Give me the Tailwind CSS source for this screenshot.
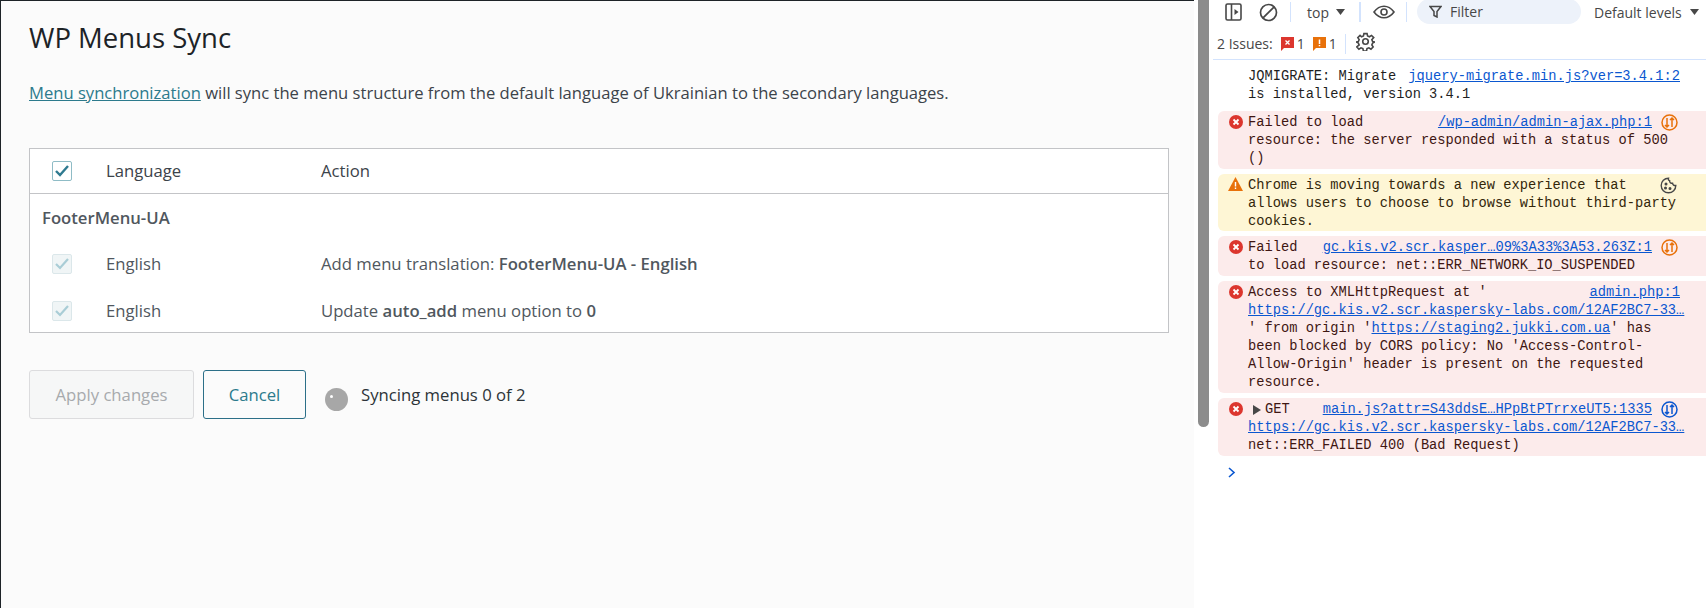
<!DOCTYPE html>
<html lang="en">
<head>
    <meta charset="UTF-8">
    <title>WP Menus Sync</title>
    <script src="https://cdn.jsdelivr.net/npm/@tailwindcss/browser@4"></script>
</head>
<body class="bg-white">
<div class="flex w-[1706px] h-[608px] overflow-hidden">

    <!-- page -->
    <main class="w-[1194px] shrink-0 border-l border-t border-[#1d2327] bg-[#fbfbfb] pl-[28px] pr-[25px] font-['Open_Sans',sans-serif] text-[#3c434a]">
        <h1 class="text-[27.5px] leading-[36px] pt-[19px] text-[#1d2327]">WP Menus Sync</h1>
        <p class="mt-[25px] text-[16.6px] leading-[24px] text-[#3c434a]"><a class="text-[#2c7a8c] underline" href="#">Menu synchronization</a> will sync the menu structure from the default language of Ukrainian to the secondary languages.</p>

        <div class="mt-[43px] border border-[#c3c4c7] bg-white text-[16.7px]">
            <div class="flex items-center h-[45px] border-b border-[#c3c4c7] text-[#3c434a]">
                <span class="ml-[22px] w-[20px] h-[20px] rounded-[2px] border border-[#8fbcc6] flex items-center justify-center">
                    <svg width="16" height="16" viewBox="0 0 16 16" fill="none" stroke="#2f7a90" stroke-width="2.4"><path d="M2 8l4 4 8-9"/></svg>
                </span>
                <span class="ml-[34px] w-[215px]">Language</span>
                <span>Action</span>
            </div>
            <div class="h-[48px] flex items-center pl-[12px] font-semibold text-[#50575e]">FooterMenu-UA</div>
            <div class="flex items-center h-[47px] pb-[3px] text-[#50575e]">
                <span class="ml-[22px] w-[20px] h-[20px] rounded-[2px] border border-[#dbe7ea] bg-[#f0f5f6] flex items-center justify-center">
                    <svg width="16" height="16" viewBox="0 0 16 16" fill="none" stroke="#a9cdd6" stroke-width="2.2"><path d="M2 8l4 4 8-9"/></svg>
                </span>
                <span class="ml-[34px] w-[215px]">English</span>
                <span>Add menu translation: <b class="font-semibold">FooterMenu-UA - English</b></span>
            </div>
            <div class="flex items-center h-[43px] text-[#50575e]">
                <span class="ml-[22px] w-[20px] h-[20px] rounded-[2px] border border-[#dbe7ea] bg-[#f0f5f6] flex items-center justify-center">
                    <svg width="16" height="16" viewBox="0 0 16 16" fill="none" stroke="#a9cdd6" stroke-width="2.2"><path d="M2 8l4 4 8-9"/></svg>
                </span>
                <span class="ml-[34px] w-[215px]">English</span>
                <span>Update <b class="font-semibold">auto_add</b> menu option to <b class="font-semibold">0</b></span>
            </div>
        </div>

        <div class="mt-[37px] flex items-start text-[16.7px]">
            <button class="w-[165px] h-[49px] rounded-[3px] border border-[#dcdcde] bg-[#f6f7f7] text-[#a7aaad]">Apply changes</button>
            <button class="ml-[9px] w-[103px] h-[49px] rounded-[3px] border border-[#2c6f88] text-[#2c7a8c]">Cancel</button>
            <span class="ml-[19px] mt-[18px] w-[23px] h-[23px] rounded-full bg-[#a7a7a7] relative"><span class="absolute left-[5px] top-[7px] w-[3px] h-[3px] rounded-full bg-white"></span></span>
            <span class="ml-[13px] mt-[13px] leading-[24px] text-[#2c3338]">Syncing menus 0 of 2</span>
        </div>
    </main>

    <!-- scrollbar -->
    <div class="w-[19px] shrink-0 pl-[4px]">
        <div class="w-[11px] h-[427px] bg-[#8c8c8c] rounded-b-[6px]"></div>
    </div>

    <!-- devtools console -->
    <section class="flex-1 font-['Open_Sans',sans-serif] text-[#474747]">
        <div class="flex items-center h-[24px] text-[14px]">
            <svg class="ml-[12px]" width="17" height="18" viewBox="0 0 17 18" fill="none" stroke="#474747" stroke-width="1.6"><rect x="1" y="1" width="15" height="16" rx="1.5"/><path d="M6.5 1v16"/><path d="M9.5 6l4 3-4 3z" fill="#474747" stroke="none"/></svg>
            <svg class="ml-[17px]" width="19" height="19" viewBox="0 0 19 19" fill="none" stroke="#474747" stroke-width="1.7"><circle cx="9.5" cy="9.5" r="8"/><path d="M3.8 15.2L15.2 3.8"/></svg>
            <span class="ml-[12px] w-px h-[20px] bg-[#d3e3fd]"></span>
            <span class="ml-[16px]">top</span>
            <svg class="ml-[7px]" width="9" height="6" viewBox="0 0 9 6" fill="#474747"><path d="M0 0h9L4.5 6z"/></svg>
            <span class="ml-[14px] w-[2px] h-[20px] bg-[#d3e3fd]"></span>
            <svg class="ml-[12px]" width="22" height="14" viewBox="0 0 22 14" fill="none" stroke="#474747" stroke-width="1.6"><path d="M1 7c2.800-3.800 6-5.800 10-5.800S18.200 3.200 21 7c-2.800 3.800-6 5.800-10 5.800S3.800 10.800 1 7z"/><circle cx="11" cy="7" r="3"/></svg>
            <span class="ml-[11px] w-px h-[20px] bg-[#d3e3fd]"></span>
            <div class="ml-[10px] w-[164px] h-[25px] -mt-[2px] rounded-full bg-[#edf2fa] flex items-center pl-[12px]">
                <svg width="13" height="13" viewBox="0 0 13 13" fill="none" stroke="#474747" stroke-width="1.5"><path d="M1 1.500h11L8 6.500V12L5 10.500v-4z"/></svg>
                <span class="ml-[8px]">Filter</span>
            </div>
            <span class="ml-[13px]">Default levels</span>
            <svg class="ml-[8px]" width="9" height="6" viewBox="0 0 9 6" fill="#474747"><path d="M0 0h9L4.5 6z"/></svg>
        </div>
        <div class="flex items-center h-[36px] border-b border-[#d3e3fd] text-[14px] pl-[4px] pt-[4px]">
            <span>2 Issues:</span>
            <svg class="ml-[8px]" width="13" height="14" viewBox="0 0 13 14"><path d="M0 0h13v11H3l-3 3z" fill="#dc362e"/><path d="M4.500 3.500l4 4m0-4l-4 4" stroke="#fff" stroke-width="1.300"/></svg>
            <span class="ml-[3px]">1</span>
            <svg class="ml-[8px]" width="13" height="14" viewBox="0 0 13 14"><path d="M0 0h13v11H3l-3 3z" fill="#e8710a"/><path d="M6.500 2.500v4.500m0 1v1.200" stroke="#fff" stroke-width="1.500"/></svg>
            <span class="ml-[3px]">1</span>
            <span class="ml-[8px] w-px h-[20px] bg-[#d3e3fd]"></span>
            <svg class="ml-[10px] -mt-[4px]" width="19" height="19" viewBox="0 0 24 24" fill="none" stroke="#474747" stroke-width="2"><circle cx="12" cy="12" r="3.500"/><path d="M10 2h4l.6 3 2.400 1 2.600-1.700 2.800 2.800L20 9.700l1 2.300 3 .6v0l-3 1.400-1 2.300 1.700 2.600-2.800 2.800-2.600-1.700-2.400 1-.6 3h-4l-.6-3-2.400-1-2.600 1.700-2.800-2.800L4 16.300l-1-2.300-3-1.400 3-.6 1-2.300-1.700-2.600 2.800-2.800L7 6l2.400-1z"/></svg>
        </div>

        <div class="pl-[5px] pt-[8px] flex flex-col gap-[5px] font-['Liberation_Mono',monospace] text-[13.73px] leading-[18px]">
            <div class="pl-[30px] pr-[26px] text-[#1f1f1f] pb-[2px]">
                <div class="flex justify-between"><span>JQMIGRATE: Migrate</span><a class="text-[#0b57d0] underline" href="#">jquery-migrate.min.js?ver=3.4.1:2</a></div>
                <div>is installed, version 3.4.1</div>
            </div>

            <div class="relative pl-[30px] pt-[3px] pb-[1px] rounded-l-[6px] bg-[#fcebeb] text-[#3f1612]">
                <svg class="absolute left-[11px] top-[4px]" width="14" height="14" viewBox="0 0 14 14"><circle cx="7" cy="7" r="7" fill="#dc362e"/><path d="M4.500 4.500l5 5m0-5l-5 5" stroke="#fff" stroke-width="1.800"/></svg>
                <div class="flex pr-[54px] justify-between"><span>Failed to load</span><a class="text-[#0b57d0] underline" href="#">/wp-admin/admin-ajax.php:1</a></div>
                <svg class="absolute right-[28px] top-[3px]" width="17" height="17" viewBox="0 0 17 17" fill="none" stroke="#e8710a" stroke-width="1.500"><circle cx="8.500" cy="8.500" r="7.500"/><path d="M6 4v9m-2-2l2 2 2-2M11 13V4M9 6l2-2 2 2"/></svg>
                <div>resource: the server responded with a status of 500</div>
                <div>()</div>
            </div>

            <div class="relative pl-[30px] pt-[3px] rounded-l-[6px] bg-[#fef6d5] text-[#33260a]">
                <svg class="absolute left-[10px] top-[3px]" width="15" height="14" viewBox="0 0 15 14"><path d="M7.500 0L15 14H0z" fill="#e8710a"/><path d="M7.500 5v4.500m0 1v1.500" stroke="#fff" stroke-width="1.400"/></svg>
                <div>Chrome is moving towards a new experience that</div>
                <svg class="absolute right-[29px] top-[3px]" width="17" height="17" viewBox="0 0 17 17" fill="none" stroke="#474747" stroke-width="1.400"><path d="M8.500 1.200a7.300 7.300 0 1 0 7.300 7.300c-1.800.300-3-.700-3.200-2.200-1.800.200-3.200-1-3-2.700-1 0-1.500-1.200-1.100-2.400z"/><circle cx="6" cy="7" r=".8" fill="#474747"/><circle cx="5.500" cy="11" r=".8" fill="#474747"/><circle cx="10" cy="11.500" r=".8" fill="#474747"/></svg>
                <div>allows users to choose to browse without third-party</div>
                <div>cookies.</div>
            </div>

            <div class="relative pl-[30px] pt-[3px] pb-[1px] rounded-l-[6px] bg-[#fcebeb] text-[#3f1612]">
                <svg class="absolute left-[11px] top-[4px]" width="14" height="14" viewBox="0 0 14 14"><circle cx="7" cy="7" r="7" fill="#dc362e"/><path d="M4.500 4.500l5 5m0-5l-5 5" stroke="#fff" stroke-width="1.800"/></svg>
                <div class="flex pr-[54px] justify-between"><span>Failed</span><a class="text-[#0b57d0] underline" href="#">gc.kis.v2.scr.kasper…09%3A33%3A53.263Z:1</a></div>
                <svg class="absolute right-[28px] top-[3px]" width="17" height="17" viewBox="0 0 17 17" fill="none" stroke="#e8710a" stroke-width="1.500"><circle cx="8.500" cy="8.500" r="7.500"/><path d="M6 4v9m-2-2l2 2 2-2M11 13V4M9 6l2-2 2 2"/></svg>
                <div>to load resource: net::ERR_NETWORK_IO_SUSPENDED</div>
            </div>

            <div class="relative pl-[30px] pt-[3px] pb-[1px] rounded-l-[6px] bg-[#fcebeb] text-[#3f1612]">
                <svg class="absolute left-[11px] top-[4px]" width="14" height="14" viewBox="0 0 14 14"><circle cx="7" cy="7" r="7" fill="#dc362e"/><path d="M4.500 4.500l5 5m0-5l-5 5" stroke="#fff" stroke-width="1.800"/></svg>
                <div class="flex pr-[26px] justify-between"><span>Access to XMLHttpRequest at '</span><a class="text-[#0b57d0] underline" href="#">admin.php:1</a></div>
                <div><a class="text-[#0b57d0] underline" href="#">https://gc.kis.v2.scr.kaspersky-labs.com/12AF2BC7-33…</a></div>
                <div>' from origin '<a class="text-[#0b57d0] underline" href="#">https://staging2.jukki.com.ua</a>' has</div>
                <div>been blocked by CORS policy: No 'Access-Control-</div>
                <div>Allow-Origin' header is present on the requested</div>
                <div>resource.</div>
            </div>

            <div class="relative pl-[30px] pt-[3px] pb-[1px] rounded-l-[6px] bg-[#fcebeb] text-[#3f1612]">
                <svg class="absolute left-[11px] top-[4px]" width="14" height="14" viewBox="0 0 14 14"><circle cx="7" cy="7" r="7" fill="#dc362e"/><path d="M4.500 4.500l5 5m0-5l-5 5" stroke="#fff" stroke-width="1.800"/></svg>
                <div class="flex pr-[54px] justify-between items-center">
                    <span class="flex items-center"><svg class="ml-[5px] mr-[4px]" width="8" height="10" viewBox="0 0 8 10" fill="#474747"><path d="M0 0l8 5-8 5z"/></svg>GET</span>
                    <a class="text-[#0b57d0] underline" href="#">main.js?attr=S43ddsE…HPpBtPTrrxeUT5:1335</a>
                </div>
                <svg class="absolute right-[28px] top-[3px]" width="17" height="17" viewBox="0 0 17 17" fill="none" stroke="#0b57d0" stroke-width="1.500"><circle cx="8.500" cy="8.500" r="7.500"/><path d="M6 4v9m-2-2l2 2 2-2M11 13V4M9 6l2-2 2 2"/></svg>
                <div><a class="text-[#0b57d0] underline" href="#">https://gc.kis.v2.scr.kaspersky-labs.com/12AF2BC7-33…</a></div>
                <div>net::ERR_FAILED 400 (Bad Request)</div>
            </div>

            <svg class="ml-[10px] mt-[6px]" width="8" height="11" viewBox="0 0 8 11" fill="none" stroke="#0b57d0" stroke-width="1.600"><path d="M1 1l5 4.500L1 10"/></svg>
        </div>
    </section>
</div>
</body>
</html>
